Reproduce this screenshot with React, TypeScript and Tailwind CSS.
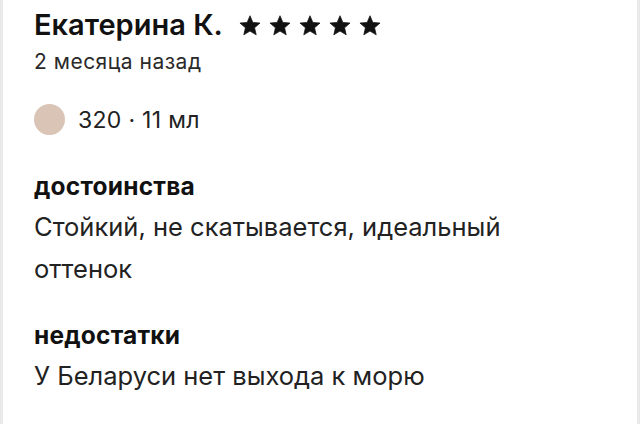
import React from 'react';

const Star = () => (
  <svg width="22" height="21" viewBox="0 0 24 23" className="block">
    <path
      d="M12 0.8l3.1 7.3 7.9 0.7-6 5.2 1.8 7.7L12 17.6l-6.8 4.1 1.8-7.7-6-5.2 7.9-0.7z"
      fill="#111"
      stroke="#111"
      strokeWidth="0.8"
      strokeLinejoin="round"
    />
  </svg>
);

const Section = ({ title, text }: { title: string; text: string }) => (
  <div>
    <h3 className="text-[24.5px] font-bold leading-[30px] tracking-[0.2px] text-[#111]">{title}</h3>
    <p className="mt-[5px] max-w-[520px] text-[25.5px] leading-[42px] text-[#222]">{text}</p>
  </div>
);

export default function App() {
  return (
    <div
      className="h-[424px] w-[640px] overflow-hidden border-x-[3px] border-[#e9e9e9] bg-white pl-[31px]"
      style={{ fontFamily: 'Inter, "Liberation Sans", sans-serif' }}
    >
      {/* reviewer header */}
      <div className="flex items-center pt-[7px]">
        <span className="text-[29px] font-semibold leading-[36px] text-[#111]">Екатерина К.</span>
        <div className="ml-[16px] flex gap-[8px]">
          {[0, 1, 2, 3, 4].map(i => (
            <Star key={i} />
          ))}
        </div>
      </div>
      <div className="mt-[6px] text-[21px] leading-[26px] tracking-[0.5px] text-[#2a2a2a]">2 месяца назад</div>

      {/* chosen shade */}
      <div className="mt-[27px] flex items-center">
        <div className="h-[31px] w-[31px] rounded-full bg-[#d9c4b6]" />
        <span className="ml-[13px] pt-[3px] text-[23px] leading-[31px] tracking-[0.3px] text-[#222]">320 · 11 мл</span>
      </div>

      <div className="mt-[35px] flex flex-col gap-[30px]">
        <Section title="достоинства" text="Стойкий, не скатывается, идеальный оттенок" />
        <Section title="недостатки" text="У Беларуси нет выхода к морю" />
      </div>
    </div>
  );
}
